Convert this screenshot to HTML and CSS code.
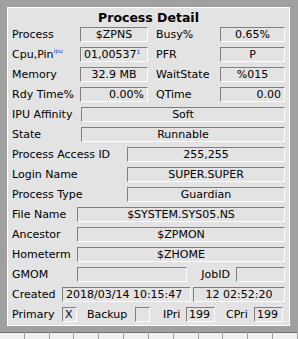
FILE: index.html
```html
<!DOCTYPE html>
<html lang="en">
<head>
    <meta charset="UTF-8">
    <title>Process Detail</title>
    <link rel="stylesheet" href="styles.css">
</head>
<body>

<div class="frame">
    <!--详细信息面板-->
    <div class="panel">
        <div class="title">Process Detail</div>

        <!--上面四行是两列-->
        <div class="pair">
            <span class="lbl">Process</span>
            <span class="box center">$ZPNS</span>
            <span class="lbl">Busy%</span>
            <span class="box center">0.65%</span>

            <span class="lbl">Cpu,Pin<span class="tag">ipu</span></span>
            <span class="box cpu">01,00537<span class="tag">1</span></span>
            <span class="lbl">PFR</span>
            <span class="box center">P</span>

            <span class="lbl">Memory</span>
            <span class="box center">32.9 MB</span>
            <span class="lbl">WaitState</span>
            <span class="box center">%015</span>

            <span class="lbl">Rdy Time%</span>
            <span class="box right">0.00%</span>
            <span class="lbl">QTime</span>
            <span class="box right">0.00</span>
        </div>

        <div class="row">
            <span class="lbl w69">IPU Affinity</span>
            <span class="box grow center">Soft</span>
        </div>
        <div class="row">
            <span class="lbl w69">State</span>
            <span class="box grow center">Runnable</span>
        </div>
        <div class="row">
            <span class="lbl w115">Process Access ID</span>
            <span class="box grow center">255,255</span>
        </div>
        <div class="row">
            <span class="lbl w115">Login Name</span>
            <span class="box grow center">SUPER.SUPER</span>
        </div>
        <div class="row">
            <span class="lbl w115">Process Type</span>
            <span class="box grow center">Guardian</span>
        </div>
        <div class="row">
            <span class="lbl w65">File Name</span>
            <span class="box grow center">$SYSTEM.SYS05.NS</span>
        </div>
        <div class="row">
            <span class="lbl w65">Ancestor</span>
            <span class="box grow center">$ZPMON</span>
        </div>
        <div class="row">
            <span class="lbl w65">Hometerm</span>
            <span class="box grow center">$ZHOME</span>
        </div>
        <div class="row">
            <span class="lbl w65">GMOM</span>
            <span class="box gmom"></span>
            <span class="lbl job">JobID</span>
            <span class="box grow"></span>
        </div>
        <div class="row">
            <span class="lbl w50">Created</span>
            <span class="box created">2018/03/14 10:15:47</span>
            <span class="box grow center">12 02:52:20</span>
        </div>
        <div class="row">
            <span class="lbl w50">Primary</span>
            <span class="box check">X</span>
            <span class="lbl backup">Backup</span>
            <span class="box check"></span>
            <span class="lbl ipri">IPri</span>
            <span class="box num">199</span>
            <span class="lbl cpri">CPri</span>
            <span class="box num">199</span>
        </div>
    </div>
</div>

<!--下面还有一个表格，只露出一点点-->
<div class="strip">
    <span></span><span></span><span></span><span></span><span></span><span></span>
    <span></span><span></span><span></span><span></span><span></span><span></span>
</div>

</body>
</html>
```

FILE: styles.css
```css
* {
    margin: 0;
    padding: 0;
    box-sizing: border-box;
}

body {
    background-color: #a0a0a0;
    font-family: "DejaVu Sans", Verdana, sans-serif;
    font-size: 11px;
    color: #000;
    width: 298px;
    height: 339px;
    overflow: hidden;
}

.frame {
    padding: 7px 8px 0 7px;
}

.panel {
    height: 319px;
    background-color: #e3e3e3;
    border: 1px solid #fff;
    padding: 0 4px 0 4px;
}

.title {
    height: 18px;
    line-height: 19px;
    text-align: center;
    font-weight: bold;
    font-size: 12.5px;
}

.pair {
    display: grid;
    grid-template-columns: 68px 68px 8px 64px 65px;
    grid-auto-rows: 15px;
    row-gap: 5px;
    margin-top: 1px;
}

.pair .lbl:nth-child(4n+3) {
    grid-column: 4;
}

.row {
    display: flex;
    align-items: center;
    height: 15px;
    margin-top: 5px;
}

.lbl {
    line-height: 15px;
    white-space: nowrap;
}

.box {
    height: 15px;
    line-height: 13px;
    border: 1px solid;
    border-color: #808080 #fff #fff #808080;
    padding: 0 3px;
    white-space: nowrap;
    overflow: hidden;
}

.center {
    text-align: center;
}

.right {
    text-align: right;
}

.grow {
    flex: 1;
}

.cpu {
    padding: 0 1px 0 3px;
}

.tag {
    display: inline-block;
    font-size: 6px;
    line-height: 6px;
    color: #2040c0;
    vertical-align: top;
    margin-top: 1px;
}

.w50 { width: 50px; }
.w65 { width: 65px; }
.w69 { width: 69px; }
.w115 { width: 115px; }

.gmom {
    width: 110px;
}

.job {
    width: 49px;
    text-align: right;
    padding-right: 6px;
}

.created {
    width: 129px;
    margin-right: 2px;
}

.check {
    width: 15px;
    padding: 0 2px;
}

.backup {
    width: 58px;
    padding-left: 10px;
}

.ipri {
    width: 36px;
    padding-left: 13px;
}

.cpri {
    width: 39px;
    padding-left: 11px;
}

.num {
    width: 29px;
    padding: 0 2px;
}

.strip {
    margin-top: 1px;
    border-top: 5px solid #a0a0a0;
    display: flex;
    height: 12px;
    background-color: #f0f0f0;
    box-shadow: inset 0 1px 0 #707070;
}

.strip span {
    width: 26px;
    border-right: 1px solid #a0a0a0;
}
```
